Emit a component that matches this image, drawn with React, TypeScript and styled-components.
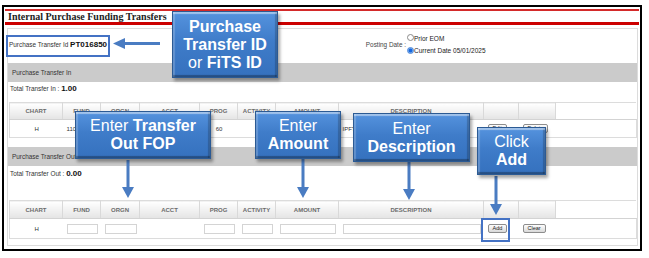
import styled, { createGlobalStyle } from "styled-components";

const GlobalStyle = createGlobalStyle`
    html, body {
        margin: 0;
        padding: 0;
        background: #fff;
    }
    body {
        font-family: "Liberation Sans", Arial, sans-serif;
    }
`;

const Stage = styled.div`
    position: relative;
    width: 649px;
    height: 258px;
    overflow: hidden;
    background: #fff;
`;

const Frame = styled.div`
    margin: 5px 0 0 2px;
    width: 640px;
    height: 246px;
    border: 2px solid #000;
    box-sizing: border-box;
    display: flex;
    flex-direction: column;
`;

const TitleBar = styled.div`
    margin: 2px 1px 0 1px;
    height: 11px;
    border-top: 2px solid #d42a2a;
    border-bottom: 3px solid #cc0000;
    padding-left: 3px;
    font-family: "Liberation Serif", "Times New Roman", serif;
    font-weight: 700;
    font-size: 10px;
    line-height: 11px;
    color: #222;
`;

const Panel = styled.div`
    flex: 1;
    margin: 3px 2px 3px 3px;
    border: 1px solid #dcdcdc;
    display: flex;
    flex-direction: column;
`;

const IdRow = styled.div`
    height: 34px;
    box-sizing: border-box;
    padding-bottom: 3px;
    display: grid;
    grid-template-columns: 350px 49px 1fr;
    align-items: center;
`;

const IdText = styled.div`
    padding-left: 1px;
    font-size: 6.4px;
    color: #333;
    b {
        font-size: 8px;
        color: #111;
    }
`;

const PostLabel = styled.div`
    text-align: right;
    padding-right: 1px;
    font-size: 6.4px;
    color: #444;
    white-space: nowrap;
`;

const RadioList = styled.div`
    display: flex;
    flex-direction: column;
`;

const RadioLine = styled.div`
    display: flex;
    align-items: center;
    height: 12px;
    font-size: 6.5px;
    color: #1a1a1a;
`;

const Radio = styled.span<{ $on?: boolean }>`
    display: inline-block;
    width: 7px;
    height: 7px;
    border-radius: 50%;
    box-sizing: border-box;
    border: 1px solid ${(p) => (p.$on ? "#4a86d8" : "#8a8a8a")};
    background: ${(p) =>
        p.$on ? "radial-gradient(circle, #1668e0 0 45%, #86b3ee 65%)" : "#fff"};
    margin-top: ${(p) => (p.$on ? "0" : "-2px")};
`;

const SectionBar = styled.div`
    height: 19px;
    background: #cbcbcb;
    padding-left: 4px;
    font-size: 6.4px;
    line-height: 19px;
    color: #333;
`;

const TotalRow = styled.div<{ $h: number; $top: number }>`
    height: ${(p) => p.$h}px;
    box-sizing: border-box;
    padding: ${(p) => p.$top}px 0 0 2px;
    font-size: 6.4px;
    line-height: 14px;
    color: #333;
    b {
        font-size: 8px;
        color: #111;
    }
`;

const Grid = styled.table<{ $gap?: number }>`
    margin: 0 0 ${(p) => p.$gap ?? 0}px 1px;
    width: 628px;
    border-collapse: collapse;
    table-layout: fixed;
    border: 1px solid #dcdcdc;
`;

const Col = styled.col<{ $w?: number }>`
    width: ${(p) => (p.$w ? `${p.$w}px` : "auto")};
`;

const Th = styled.th<{ $h: number; $plain?: boolean }>`
    height: ${(p) => p.$h}px;
    padding: 0;
    font-size: 6px;
    font-weight: 700;
    color: #6b6b6b;
    text-align: center;
    background: ${(p) => (p.$plain ? "#fff" : "linear-gradient(#ffffff, #e4e4e4)")};
    border-right: 1px solid ${(p) => (p.$plain ? "transparent" : "#d9d9d9")};
    border-bottom: 1px solid #d3d3d3;
`;

const Td = styled.td<{ $h: number; $align?: string }>`
    height: ${(p) => p.$h}px;
    padding: 0 3px 0 4px;
    font-size: 6px;
    color: #333;
    text-align: ${(p) => p.$align ?? "left"};
    vertical-align: middle;
`;

const Field = styled.input`
    display: block;
    width: 100%;
    height: 10px;
    box-sizing: border-box;
    padding: 0;
    border: 1px solid #d4d4d4;
    background: #fff;
`;

const Btn = styled.button`
    display: block;
    height: 9px;
    padding: 0 4px;
    font-family: "Liberation Sans", Arial, sans-serif;
    font-size: 5.5px;
    line-height: 7px;
    color: #222;
    border: 1px solid #8d8d8d;
    border-radius: 2px;
    background: linear-gradient(#fdfdfd, #d9d9d9);
`;

const Callout = styled.div<{ $x: number; $y: number; $w: number; $h: number }>`
    position: absolute;
    left: ${(p) => p.$x}px;
    top: ${(p) => p.$y}px;
    width: ${(p) => p.$w}px;
    height: ${(p) => p.$h}px;
    box-sizing: border-box;
    display: flex;
    flex-direction: column;
    justify-content: center;
    align-items: center;
    background: linear-gradient(180deg, #5593de 0%, #3f7cc9 45%, #3571be 100%);
    border: 1px solid #2b5a94;
    box-shadow: inset 0 2px 1px rgba(255, 255, 255, 0.45),
        inset 0 -2px 1px rgba(0, 0, 0, 0.3), inset 2px 0 1px rgba(255, 255, 255, 0.2),
        inset -2px 0 1px rgba(0, 0, 0, 0.2), 2px 3px 3px rgba(0, 0, 0, 0.35);
    color: #fff;
    font-family: "Liberation Sans", Arial, sans-serif;
    font-size: 16px;
    line-height: 18px;
    text-align: center;
    white-space: nowrap;
`;

const Mark = styled.div<{ $x: number; $y: number; $w: number; $h: number }>`
    position: absolute;
    left: ${(p) => p.$x}px;
    top: ${(p) => p.$y}px;
    width: ${(p) => p.$w}px;
    height: ${(p) => p.$h}px;
    box-sizing: border-box;
    border: 2px solid #4472c4;
`;

const ArrowBox = styled.svg<{ $x: number; $y: number }>`
    position: absolute;
    left: ${(p) => p.$x}px;
    top: ${(p) => p.$y}px;
    overflow: visible;
`;

const BLUE = "#4a7cc2";

function DownArrow({ x, y, len }: { x: number; y: number; len: number }) {
    return (
        <ArrowBox $x={x} $y={y} width={12} height={len}>
            <rect x={4.5} y={0} width={3} height={len - 10} fill={BLUE} />
            <polygon points={`0,${len - 11} 12,${len - 11} 6,${len}`} fill={BLUE} />
        </ArrowBox>
    );
}

function LeftArrow({ x, y, len }: { x: number; y: number; len: number }) {
    return (
        <ArrowBox $x={x} $y={y} width={len} height={11}>
            <polygon points="0,5.5 12,0 12,11" fill={BLUE} />
            <rect x={11} y={4} width={len - 11} height={3} fill={BLUE} />
        </ArrowBox>
    );
}

const COLS = [53, 38, 39, 60, 38, 38, 63, 145, 35, 37];
const HEADS = ["CHART", "FUND", "ORGN", "ACCT", "PROG", "ACTIVITY", "AMOUNT", "DESCRIPTION", "", ""];

function Head({ h }: { h: number }) {
    return (
        <>
            <colgroup>
                {COLS.map((w, i) => (
                    <Col key={i} $w={w} />
                ))}
                <Col />
            </colgroup>
            <thead>
                <tr>
                    {HEADS.map((t, i) => (
                        <Th key={i} $h={h}>
                            {t}
                        </Th>
                    ))}
                    <Th $h={h} $plain />
                </tr>
            </thead>
        </>
    );
}

export default function App() {
    return (
        <Stage>
            <GlobalStyle />
            <Frame>
                <TitleBar>Internal Purchase Funding Transfers</TitleBar>
                <Panel>
                    <IdRow>
                        <IdText>
                            Purchase Transfer Id <b>PT016850</b>
                        </IdText>
                        <PostLabel>Posting Date :</PostLabel>
                        <RadioList>
                            <RadioLine>
                                <Radio />
                                Prior EOM
                            </RadioLine>
                            <RadioLine>
                                <Radio $on />
                                Current Date 05/01/2025
                            </RadioLine>
                        </RadioList>
                    </IdRow>

                    <SectionBar>Purchase Transfer In</SectionBar>
                    <TotalRow $h={20} $top={0}>
                        Total Transfer In : <b>1.00</b>
                    </TotalRow>
                    <Grid $gap={9}>
                        <Head h={16} />
                        <tbody>
                            <tr>
                                <Td $h={17} $align="center">H</Td>
                                <Td $h={17}>110000</Td>
                                <Td $h={17}>H10000</Td>
                                <Td $h={17} $align="center">720000</Td>
                                <Td $h={17} $align="center">60</Td>
                                <Td $h={17} />
                                <Td $h={17} $align="center">1.00</Td>
                                <Td $h={17}>IPFT 05/2025</Td>
                                <Td $h={17}>
                                    <Btn>Edit</Btn>
                                </Td>
                                <Td $h={17}>
                                    <Btn>Delete</Btn>
                                </Td>
                                <Td $h={17} />
                            </tr>
                        </tbody>
                    </Grid>

                    <SectionBar>Purchase Transfer Out</SectionBar>
                    <TotalRow $h={34} $top={1}>
                        Total Transfer Out : <b>0.00</b>
                    </TotalRow>
                    <Grid>
                        <Head h={17} />
                        <tbody>
                            <tr>
                                <Td $h={19} $align="center">H</Td>
                                <Td $h={19}>
                                    <Field />
                                </Td>
                                <Td $h={19}>
                                    <Field />
                                </Td>
                                <Td $h={19} />
                                <Td $h={19}>
                                    <Field />
                                </Td>
                                <Td $h={19}>
                                    <Field />
                                </Td>
                                <Td $h={19}>
                                    <Field />
                                </Td>
                                <Td $h={19}>
                                    <Field />
                                </Td>
                                <Td $h={19}>
                                    <Btn>Add</Btn>
                                </Td>
                                <Td $h={19}>
                                    <Btn>Clear</Btn>
                                </Td>
                                <Td $h={19} />
                            </tr>
                        </tbody>
                    </Grid>
                </Panel>
            </Frame>

            <Mark $x={6} $y={35} $w={104} $h={22} />
            <Mark $x={481} $y={218} $w={29} $h={24} />

            <LeftArrow x={113} y={37.5} len={47} />
            <DownArrow x={122} y={160} len={38} />
            <DownArrow x={297} y={159} len={39} />
            <DownArrow x={403} y={162} len={38} />
            <DownArrow x={490} y={176} len={39} />

            <Callout $x={172} $y={11} $w={106} $h={67}>
                <b>Purchase</b>
                <b>Transfer ID</b>
                <span>
                    or <b>FiTS ID</b>
                </span>
            </Callout>
            <Callout $x={75} $y={111} $w={136} $h={48}>
                <span>
                    Enter <b>Transfer</b>
                </span>
                <b>Out FOP</b>
            </Callout>
            <Callout $x={255} $y={111} $w={86} $h={48}>
                <span>Enter</span>
                <b>Amount</b>
            </Callout>
            <Callout $x={353} $y={113} $w={117} $h={49}>
                <span>Enter</span>
                <b>Description</b>
            </Callout>
            <Callout $x={477} $y={127} $w={69} $h={48}>
                <span>Click</span>
                <b>Add</b>
            </Callout>
        </Stage>
    );
}
